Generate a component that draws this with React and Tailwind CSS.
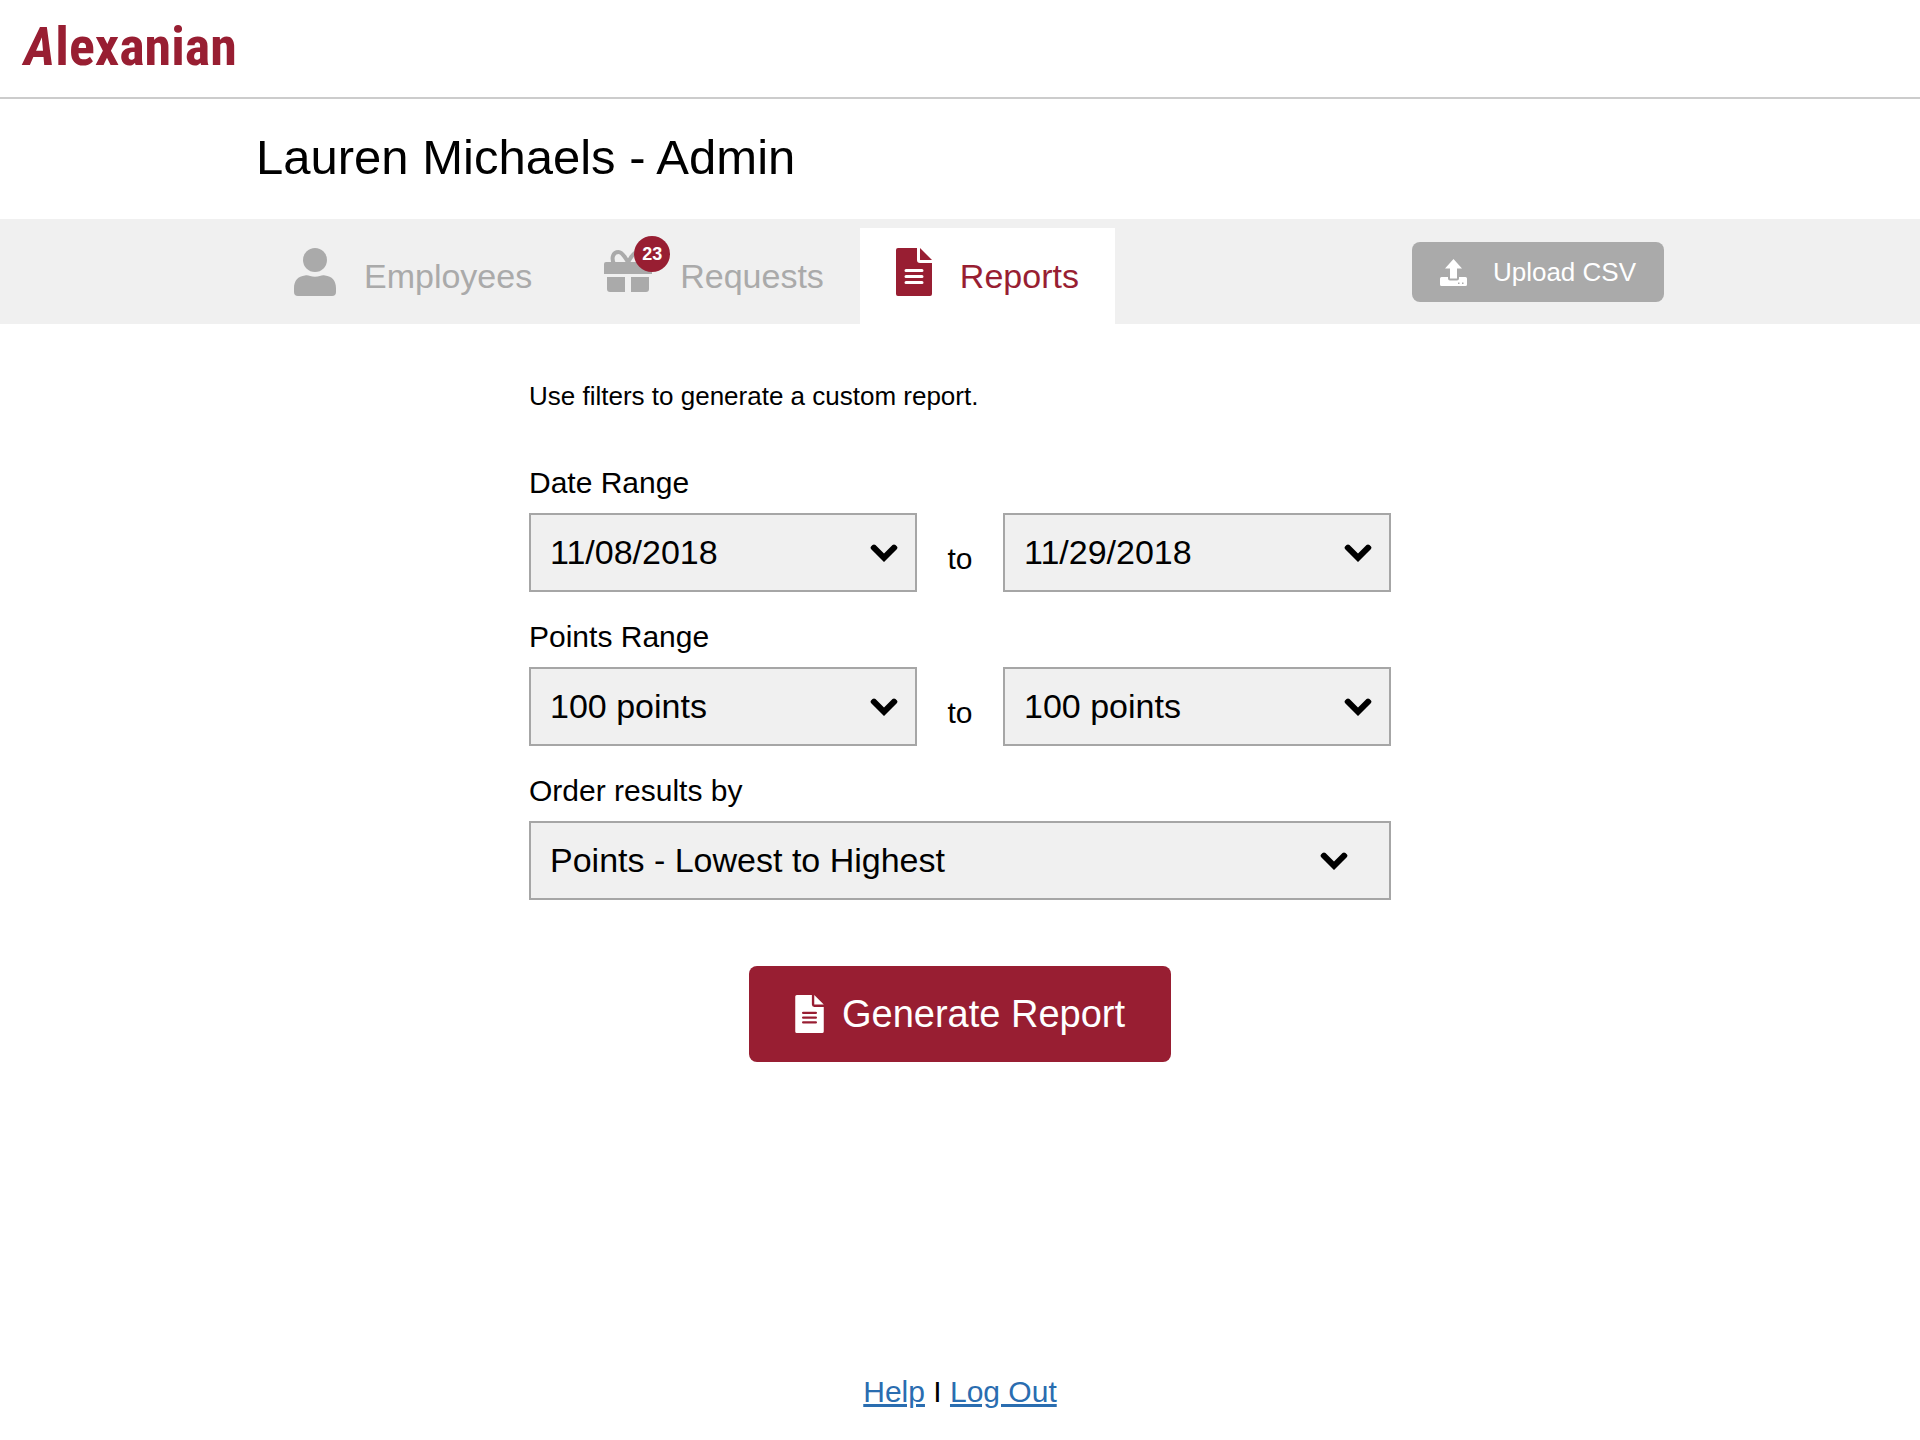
import React, { useState } from 'react';

const UserIcon = () => (
  <svg viewBox="0 0 42 48" width="42" height="48" fill="currentColor" aria-hidden="true">
    <ellipse cx="21" cy="12" rx="12" ry="12" />
    <path d="M11 27.500C14 26.200 16 28.700 21 28.700S28 26.200 31 27.500C38 28 42 33 42 40V44Q42 48 38 48H4Q0 48 0 44V40C0 33 4 28 11 27.500Z" />
  </svg>
);

const GiftIcon = () => (
  <svg viewBox="0 0 48 42" width="48" height="42" fill="currentColor" aria-hidden="true">
    <path d="M10 14C7 8 9 2 14.500 2C19 2 21 8 24 12C27 8 29 2 33.500 2C39 2 41 8 38 14" fill="none" stroke="currentColor" strokeWidth="4" />
    <path d="M22 11L24 8L26 11V14H22Z" />
    <path d="M2 12H46Q48 12 48 14V24H0V14Q0 12 2 12Z" />
    <path d="M3 27H21V42H6Q3 42 3 39Z" />
    <path d="M27 27H45V39Q45 42 42 42H27Z" />
  </svg>
);

const FileIcon = ({ className }) => (
  <svg viewBox="0 0 36 48" className={className} fill="currentColor" aria-hidden="true">
    <path
      fillRule="evenodd"
      d="M2 0H21V12Q21 15 24 15H36V46Q36 48 34 48H2Q0 48 0 46V2Q0 0 2 0ZM10 21A1.500 1.500 0 0 0 10 24H26A1.500 1.500 0 0 0 26 21ZM10 27A1.500 1.500 0 0 0 10 30H26A1.500 1.500 0 0 0 26 27ZM10 33A1.500 1.500 0 0 0 10 36H26A1.500 1.500 0 0 0 26 33Z"
    />
    <path d="M24 0L36 12H24Z" />
  </svg>
);

const UploadIcon = () => (
  <svg viewBox="0 0 27 27" width="27" height="27" fill="currentColor" aria-hidden="true">
    <path d="M13.500 0L22 9.500H17V19.500H10V9.500H5Z" />
    <path
      fillRule="evenodd"
      d="M1.500 18H8V19.500Q8 21.500 10 21.500H17Q19 21.500 19 19.500V18H25.500Q27 18 27 19.500V25.500Q27 27 25.500 27H1.500Q0 27 0 25.500V19.500Q0 18 1.500 18ZM18 23.500V25H19.500V23.500ZM22 23.500V25H23.500V23.500Z"
    />
  </svg>
);

const ChevronIcon = ({ className }) => (
  <svg viewBox="0 0 28 18" width="28" height="18" fill="currentColor" aria-hidden="true" className={className}>
    <path d="M14 18L1 5Q0 3.500 1 2.500L2.500 1Q4 0 5.500 1L14 9.500L22.500 1Q24 0 25.500 1L27 2.500Q28 3.500 27 5Z" />
  </svg>
);

const SelectBox = ({ id, label, value, onChange, options, wide }) => (
  <div className="relative flex flex-1 items-center">
    <select
      id={id}
      aria-label={label}
      value={value}
      onChange={(e) => onChange(e.target.value)}
      className="h-[79px] w-full appearance-none border-2 border-[#a6a6a6] bg-[#f0f0f0] pl-[19px] pr-16 text-[34px] text-black outline-none focus:border-[#981e32]"
    >
      {options.map((o) => (
        <option key={o} value={o}>{o}</option>
      ))}
    </select>
    <ChevronIcon className={wide ? 'pointer-events-none absolute right-[43px]' : 'pointer-events-none absolute right-[19px]'} />
  </div>
);

const DATES = ['11/08/2018', '11/15/2018', '11/22/2018', '11/29/2018'];
const POINTS = ['100 points', '250 points', '500 points'];
const ORDERS = ['Points - Lowest to Highest', 'Points - Highest to Lowest'];

const App = () => {
  const [filters, setFilters] = useState({
    dateFrom: '11/08/2018',
    dateTo: '11/29/2018',
    pointsFrom: '100 points',
    pointsTo: '100 points',
    order: 'Points - Lowest to Highest',
  });

  const setFilter = (key) => (value) => setFilters({ ...filters, [key]: value });

  return (
    <div className="flex min-h-screen flex-col bg-white font-['Liberation_Sans',Arial,sans-serif] text-black">
      <header className="flex h-[99px] items-center border-b-2 border-[#cccccc] px-6 pb-1">
        <a href="#home" className="font-['Roboto_Condensed','Liberation_Sans',sans-serif] text-[54px] leading-none font-bold text-[#981e32]">
          <span className="italic">A</span>lexanian
        </a>
      </header>

      <div className="mx-auto w-full max-w-[1408px]">
        <h1 className="pt-7 pb-8 text-[49px] leading-[60px]">Lauren Michaels - Admin</h1>
      </div>

      <nav className="bg-[#f0f0f0]">
        <div className="mx-auto flex h-[105px] w-full max-w-[1408px] items-end justify-between pl-[2px]">
          <div className="flex h-24 text-[34px] leading-10 text-[#aaaaaa]">
            <a href="#employees" className="flex items-start gap-7 px-9 pt-5">
              <UserIcon />
              <span className="pt-2">Employees</span>
            </a>
            <a href="#requests" className="flex items-start gap-7 px-9 pt-5">
              <span className="relative pt-[2px]">
                <GiftIcon />
                <span className="absolute -top-3 left-[30px] flex size-9 items-center justify-center rounded-full bg-[#981e32] text-lg font-bold text-white">23</span>
              </span>
              <span className="pt-2">Requests</span>
            </a>
            <a href="#reports" aria-current="page" className="flex items-start gap-7 bg-white px-9 pt-5 text-[#981e32]">
              <FileIcon className="h-12 w-9" />
              <span className="pt-2">Reports</span>
            </a>
          </div>
          <button type="button" className="mb-[22px] flex h-[60px] items-center gap-[26px] rounded-lg bg-[#aaaaaa] px-7 text-[26px] text-white">
            <UploadIcon />
            Upload CSV
          </button>
        </div>
      </nav>

      <main className="mx-auto w-full max-w-[862px] flex-1">
        <form onSubmit={(e) => e.preventDefault()}>
          <p className="pt-14 text-[26px] leading-8">Use filters to generate a custom report.</p>

          <label htmlFor="date-from" className="mt-[53px] block text-[30px] leading-9">Date Range</label>
          <div className="mt-3 flex items-center">
            <SelectBox id="date-from" value={filters.dateFrom} onChange={setFilter('dateFrom')} options={DATES} />
            <span className="w-[86px] pt-3 text-center text-[30px] leading-9">to</span>
            <SelectBox id="date-to" label="Date range end" value={filters.dateTo} onChange={setFilter('dateTo')} options={DATES} />
          </div>

          <label htmlFor="points-from" className="mt-[27px] block text-[30px] leading-9">Points Range</label>
          <div className="mt-3 flex items-center">
            <SelectBox id="points-from" value={filters.pointsFrom} onChange={setFilter('pointsFrom')} options={POINTS} />
            <span className="w-[86px] pt-3 text-center text-[30px] leading-9">to</span>
            <SelectBox id="points-to" label="Points range end" value={filters.pointsTo} onChange={setFilter('pointsTo')} options={POINTS} />
          </div>

          <label htmlFor="order" className="mt-[27px] block text-[30px] leading-9">Order results by</label>
          <div className="mt-3 flex">
            <SelectBox id="order" value={filters.order} onChange={setFilter('order')} options={ORDERS} wide />
          </div>

          <div className="mt-[66px] flex justify-center">
            <button type="submit" className="flex h-24 items-center gap-[18px] rounded-lg bg-[#981e32] px-[46px] text-[38px] text-white">
              <FileIcon className="h-[38px] w-[29px]" />
              Generate Report
            </button>
          </div>
        </form>
      </main>

      <footer className="pb-[30px] text-center text-[30px] leading-9">
        <a href="#help" className="text-[#2a6db0] underline">Help</a> I <a href="#logout" className="text-[#2a6db0] underline">Log Out</a>
      </footer>
    </div>
  );
};

export default App;
